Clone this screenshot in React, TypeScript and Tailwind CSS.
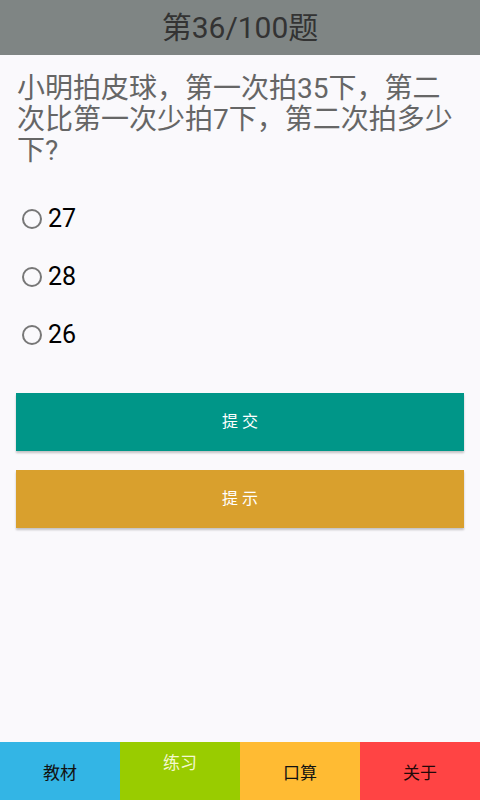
const FONT = { fontFamily: 'Roboto, "Noto Sans CJK SC", sans-serif' };

const options = ["27", "28", "26"];

const tabs = [
  { label: "教材", bg: "bg-[#33b5e5]", text: "text-[#111] pt-[6px]" },
  { label: "练习", bg: "bg-[#99cc00]", text: "text-[#f4f8d2] pb-[14px]" },
  { label: "口算", bg: "bg-[#ffbb33]", text: "text-[#111] pt-[6px]" },
  { label: "关于", bg: "bg-[#ff4444]", text: "text-[#220808] pt-[6px]" },
];

export default function App() {
  return (
    <div className="w-[480px] h-[800px] flex flex-col bg-[#faf9fc]" style={FONT}>
      <header className="h-[55px] shrink-0 bg-[#7f8584] flex items-center justify-center">
        <h1 className="text-[30px] text-[#333]">第36/100题</h1>
      </header>

      <main className="flex-1 px-4 pt-[18px]">
        <p className="ml-[1px] text-[28px] leading-[31px] text-[#666]">
          小明拍皮球，第一次拍35下，第二次比第一次少拍7下，第二次拍多少下?
        </p>

        <div className="mt-[24px]">
          {options.map((o) => (
            <label key={o} className="h-[58px] flex items-center">
              <span className="ml-[6px] w-[20px] h-[20px] rounded-full border-2 border-[#777]" />
              <span className="ml-[6px] text-[25px] text-black">{o}</span>
            </label>
          ))}
        </div>

        <div className="mt-[29px] flex flex-col gap-[19px]">
          <button
            type="button"
            className="h-[58px] w-full pl-[4px] bg-[#009688] text-white text-[16px] tracking-[4px] shadow-[0_2px_2px_rgba(0,0,0,0.22)]"
          >
            提交
          </button>
          <button
            type="button"
            className="h-[58px] w-full pl-[4px] bg-[#d9a02d] text-white text-[16px] tracking-[4px] shadow-[0_2px_2px_rgba(0,0,0,0.22)]"
          >
            提示
          </button>
        </div>
      </main>

      <nav className="h-[58px] shrink-0 grid grid-cols-4">
        {tabs.map((t) => (
          <div key={t.label} className={`${t.bg} flex items-center justify-center`}>
            <span className={`${t.text} text-[17px]`}>{t.label}</span>
          </div>
        ))}
      </nav>
    </div>
  );
}
